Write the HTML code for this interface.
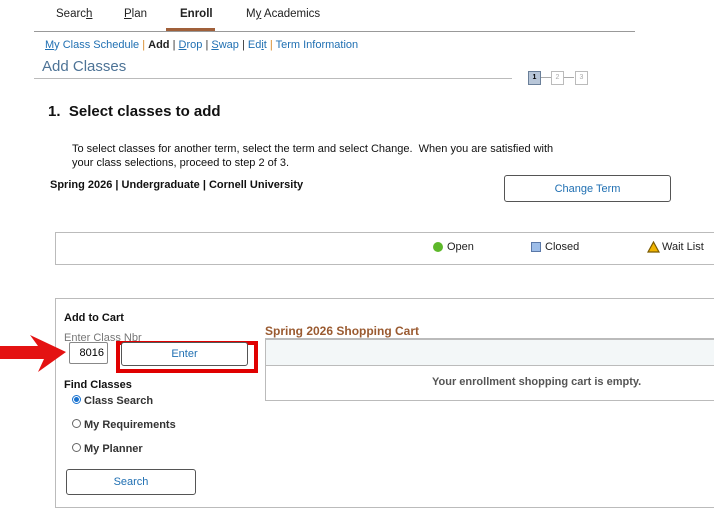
<!DOCTYPE html>
<html><head><style>
body{margin:0;width:714px;height:498px;overflow:hidden;background:#fff;font-family:"Liberation Sans",Arial,sans-serif;position:relative}
.a{position:absolute;white-space:nowrap}
.btn{position:absolute;border:1px solid #555;border-radius:3px;background:#fff;color:#1f6fb2;font-size:11px;text-align:center;box-sizing:border-box}
</style></head><body>
<div class="a" style="left:56px;top:8px;font-size:11.5px;color:#222">Searc<u>h</u></div>
<div class="a" style="left:124px;top:8px;font-size:11.5px;color:#222"><u>P</u>lan</div>
<div class="a" style="top:8px;font-size:11.5px;font-weight:bold;color:#222;left:180px">Enroll</div>
<div class="a" style="left:246px;top:8px;font-size:11.5px;color:#222">M<u>y</u> Academics</div>
<div class="a" style="left:166px;top:28px;width:49px;height:3px;background:#a0603a"></div>
<div class="a" style="left:34px;top:31px;width:601px;height:1px;background:#999"></div>
<div class="a" style="left:45px;top:39px;font-size:11px;color:#1f6fb2"><u>M</u>y Class Schedule <span style="color:#d88a2a">|</span> <b style="color:#222">Add</b> <span style="color:#333">|</span> <u>D</u>rop <span style="color:#333">|</span> <u>S</u>wap <span style="color:#333">|</span> Ed<u>i</u>t <span style="color:#d88a2a">|</span> Term Information</div>
<div class="a" style="left:42px;top:58px;font-size:15px;color:#4d7396">Add Classes</div>
<div class="a" style="left:34px;top:78px;width:478px;height:1px;background:#bbb"></div>
<div class="a" style="left:528px;top:71px;width:11px;height:12px;background:#b8c6d8;border:1px solid #6a7f99;font-size:7px;text-align:center;line-height:12px;font-weight:bold">1</div>
<div class="a" style="left:541px;top:77px;width:10px;height:1px;background:#aaa"></div>
<div class="a" style="left:551px;top:71px;width:11px;height:12px;border:1px solid #bbb;font-size:7px;text-align:center;line-height:12px;color:#aaa">2</div>
<div class="a" style="left:564px;top:77px;width:10px;height:1px;background:#aaa"></div>
<div class="a" style="left:575px;top:71px;width:11px;height:12px;border:1px solid #bbb;font-size:7px;text-align:center;line-height:12px;color:#aaa">3</div>
<div class="a" style="left:48px;top:103px;font-size:15px;font-weight:bold;color:#111">1.&nbsp; Select classes to add</div>
<div class="a" style="left:72px;top:142px;font-size:11px;color:#111;line-height:14px">To select classes for another term, select the term and select Change.&nbsp; When you are satisfied with<br>your class selections, proceed to step 2 of 3.</div>
<div class="a" style="left:50px;top:179px;font-size:11px;font-weight:bold;color:#111">Spring 2026 | Undergraduate | Cornell University</div>
<div class="btn" style="left:504px;top:175px;width:167px;height:27px;line-height:26px">Change Term</div>
<div class="a" style="left:55px;top:232px;width:670px;height:33px;border:1px solid #bbb;box-sizing:border-box"></div>
<div class="a" style="left:433px;top:242px;width:10px;height:10px;border-radius:50%;background:#5db82a"></div>
<div class="a" style="left:447px;top:241px;font-size:11px;color:#222">Open</div>
<div class="a" style="left:531px;top:242px;width:8px;height:8px;background:#9dbde8;border:1px solid #5a78a8"></div>
<div class="a" style="left:545px;top:241px;font-size:11px;color:#222">Closed</div>
<svg class="a" style="left:647px;top:241px" width="13" height="12"><polygon points="6.5,1 12,11 1,11" fill="#f0b400" stroke="#7a5a00" stroke-width="1.2"/></svg>
<div class="a" style="left:662px;top:241px;font-size:11px;color:#222">Wait List</div>
<div class="a" style="left:55px;top:298px;width:670px;height:210px;border:1px solid #bbb;box-sizing:border-box"></div>
<div class="a" style="left:64px;top:312px;font-size:11px;font-weight:bold;color:#111">Add to Cart</div>
<div class="a" style="left:64px;top:332px;font-size:11px;color:#777">Enter Class Nbr</div>
<div class="a" style="left:69px;top:342px;width:39px;height:22px;border:1px solid #888;border-radius:2px;background:#fff;box-sizing:border-box;font-size:11px;line-height:20px;text-align:right;padding-right:3px">8016</div>
<div class="a" style="left:116px;top:341px;width:142px;height:32px;border:4px solid #e00000;box-sizing:border-box"></div>
<div class="btn" style="left:121px;top:342px;width:127px;height:24px;line-height:22px">Enter</div>
<svg class="a" style="left:0;top:332px" width="68" height="42"><polygon points="0,14 38,14 30,3 66,20 38,40 44,27 0,27" fill="#e41212"/></svg>
<div class="a" style="left:64px;top:379px;font-size:11px;font-weight:bold;color:#111">Find Classes</div>
<div class="a" style="left:72px;top:395px;width:7px;height:7px;border-radius:50%;border:1px solid #1a73d0;background:radial-gradient(#1a73d0 45%,#fff 55%)"></div>
<div class="a" style="left:84px;top:395px;font-size:11px;color:#333;font-weight:bold">Class Search</div>
<div class="a" style="left:72px;top:419px;width:7px;height:7px;border-radius:50%;border:1px solid #666"></div>
<div class="a" style="left:84px;top:419px;font-size:11px;color:#333;font-weight:bold">My Requirements</div>
<div class="a" style="left:72px;top:443px;width:7px;height:7px;border-radius:50%;border:1px solid #666"></div>
<div class="a" style="left:84px;top:443px;font-size:11px;color:#333;font-weight:bold">My Planner</div>
<div class="btn" style="left:66px;top:469px;width:130px;height:26px;line-height:24px">Search</div>
<div class="a" style="left:265px;top:324px;font-size:12px;font-weight:bold;color:#9a5a30">Spring 2026 Shopping Cart</div>
<div class="a" style="left:265px;top:338px;width:460px;height:63px;border:1px solid #bbb;border-top:2px solid #bbb;box-sizing:border-box"></div>
<div class="a" style="left:266px;top:340px;width:450px;height:25px;background:#f3f7f8;border-bottom:1px solid #bbb"></div>
<div class="a" style="left:432px;top:376px;font-size:11px;font-weight:bold;color:#555">Your enrollment shopping cart is empty.</div>
</body></html>
